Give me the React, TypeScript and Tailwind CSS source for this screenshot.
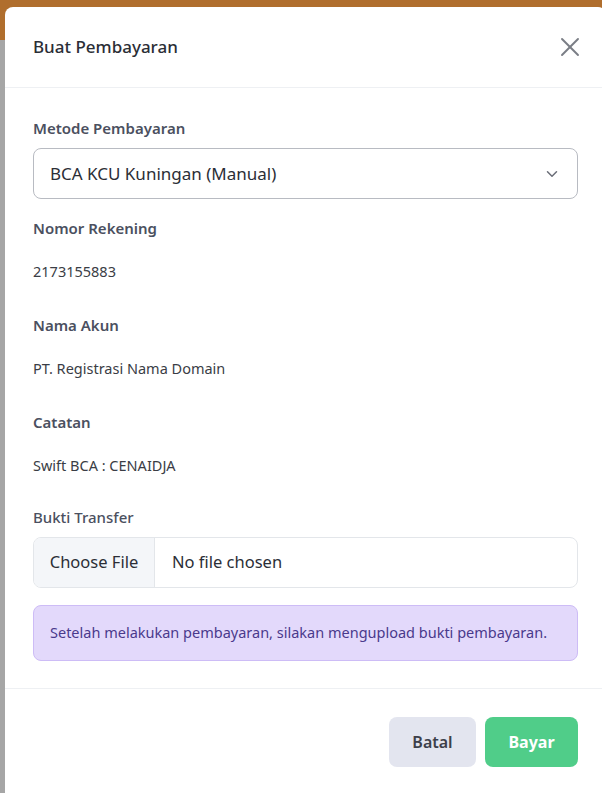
import { ChevronDown, X } from 'lucide-react'

const font = { fontFamily: '"Noto Sans", "Open Sans", sans-serif' }

function InfoRow({ label, value, first }: { label: string; value: string; first?: boolean }) {
  return (
    <div className={first ? 'mt-[17px]' : 'mt-[30px]'}>
      <div className="text-[15px] leading-6 font-semibold text-[#4b5060]">{label}</div>
      <div className="mt-[19px] text-[14.5px] leading-6 text-[#3a3d45]">{value}</div>
    </div>
  )
}

export default function App() {
  return (
    <div className="relative h-[793px] overflow-hidden bg-[#a6a6a6]" style={font}>
      <div className="h-10 bg-[#b06e2d]" />

      {/* modal */}
      <div className="absolute left-[5px] top-[7px] w-[601px] h-[800px] bg-white rounded-lg flex flex-col">
        <div className="h-[81px] px-7 flex items-center justify-between border-b border-[#eef0f3]">
          <h2 className="text-[17px] text-[#2b2e36] font-medium">Buat Pembayaran</h2>
          <X size={32} strokeWidth={1.4} className="text-[#7a7d85] -mr-2" />
        </div>

        <div className="px-7 pt-7 pb-[27px] border-b border-[#eef0f3]">
          <div className="text-[15px] leading-6 font-semibold text-[#4b5060]">Metode Pembayaran</div>
          <div className="mt-2 h-[51px] rounded-lg border border-[#b8bbc2] flex items-center justify-between pl-4 pr-4">
            <span className="text-[17px] text-[#2b2e36]">BCA KCU Kuningan (Manual)</span>
            <ChevronDown size={18} strokeWidth={2} className="text-[#6b6e78]" />
          </div>

          <InfoRow first label="Nomor Rekening" value="2173155883" />
          <InfoRow label="Nama Akun" value="PT. Registrasi Nama Domain" />
          <InfoRow label="Catatan" value="Swift BCA : CENAIDJA" />

          <div className="mt-[28px] text-[15px] leading-6 font-medium text-[#4b5060]">Bukti Transfer</div>
          <div className="mt-2 h-[51px] rounded-lg border border-[#e3e6ea] flex items-stretch overflow-hidden">
            <div className="w-[121px] bg-[#f4f6f9] border-r border-[#e3e6ea] flex items-center justify-center text-[16.5px] text-[#2b2e36]">
              Choose File
            </div>
            <div className="flex items-center pl-[17px] text-[16.5px] text-[#2b2e36]">No file chosen</div>
          </div>

          <div className="mt-[17px] h-[56px] rounded-lg bg-[#e3d9fb] border border-[#cdbcf6] flex items-center px-4 text-[14.5px] text-[#4a3a8c]">
            Setelah melakukan pembayaran, silakan mengupload bukti pembayaran.
          </div>
        </div>

        <div className="px-7 pt-7 flex justify-end gap-[9px]">
          <button className="h-[50px] w-[87px] rounded-lg bg-[#e3e5ef] text-[16px] font-semibold text-[#3d404a]">
            Batal
          </button>
          <button className="h-[50px] w-[93px] rounded-lg bg-[#50cd89] text-[16px] font-bold text-white">
            Bayar
          </button>
        </div>
      </div>
    </div>
  )
}
